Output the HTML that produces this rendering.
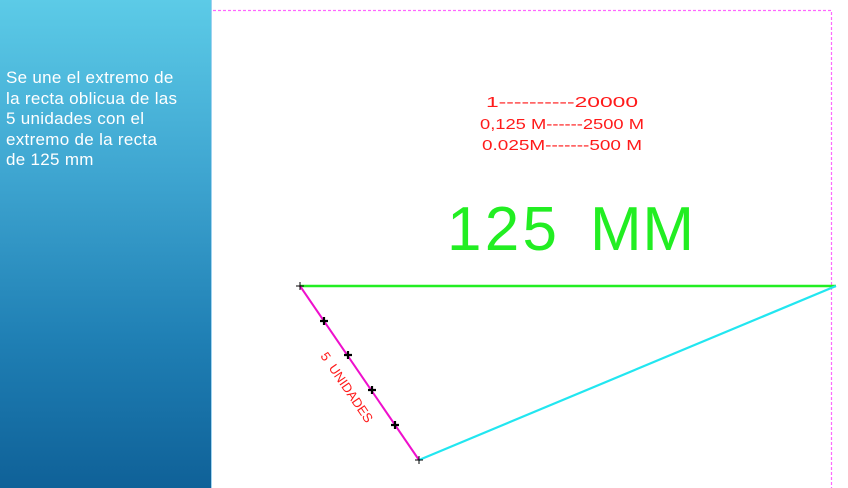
<!DOCTYPE html>
<html><head><meta charset="utf-8"><style>
html,body{margin:0;padding:0;width:848px;height:488px;overflow:hidden;background:#fff}
.panel{position:absolute;left:0;top:0;width:211px;height:488px;background:linear-gradient(180deg,#5ccbe7 0%,#3fa6d1 35%,#1f7fb4 70%,#0f6198 100%);border-right:1px solid #9fd3f0}
.panel p{position:absolute;left:6px;top:68px;margin:0;color:#fff;font-family:"Liberation Sans",sans-serif;font-size:17px;letter-spacing:0.3px;line-height:20.5px;width:210px;white-space:nowrap}
svg{position:absolute;left:0;top:0}
</style></head><body>
<div class="panel"><p>Se une el extremo de<br>la recta oblicua de las<br>5 unidades con el<br>extremo de la recta<br>de 125 mm</p></div>
<svg width="848" height="488" viewBox="0 0 848 488">
<path d="M213 10.5H831.5V488" fill="none" stroke="#ff66ff" stroke-width="1.2" stroke-dasharray="3,2"/>
<g font-family="Liberation Sans,sans-serif" fill="#ff1a1a" font-size="14.5" text-anchor="middle">
<text x="562" y="107" textLength="152" lengthAdjust="spacingAndGlyphs">1----------20000</text>
<text x="562" y="129" textLength="164" lengthAdjust="spacingAndGlyphs" xml:space="preserve">0,125 M------2500 M</text>
<text x="562" y="150" textLength="160" lengthAdjust="spacingAndGlyphs">0.025M-------500 M</text>
</g>
<g font-family="Liberation Sans,sans-serif" font-size="62" fill="#22ee22">
<text x="447" y="250" textLength="110" lengthAdjust="spacing">125</text>
<text x="590" y="250" textLength="104" lengthAdjust="spacing">MM</text>
</g>
<line x1="300" y1="286" x2="836" y2="286" stroke="#22ee22" stroke-width="2.5"/>
<line x1="300" y1="286" x2="419" y2="460" stroke="#ee10cc" stroke-width="2"/>
<line x1="419" y1="460" x2="836" y2="286" stroke="#22e6f0" stroke-width="2.2"/>
<g stroke="#000" stroke-width="2.2">
<path d="M320 321h8M324 317v8M344 355h8M348 351v8M368 390h8M372 386v8M391 425h8M395 421v8"/>
</g>
<g stroke="#000" stroke-width="1"><path d="M296 286h8M300 282v8M415 460h8M419 456v8"/></g>
<text transform="translate(320,356) rotate(55.6)" font-family="Liberation Sans,sans-serif" font-size="13" fill="#ff1a1a" xml:space="preserve" textLength="82" lengthAdjust="spacingAndGlyphs">5  UNIDADES</text>
</svg>
</body></html>
